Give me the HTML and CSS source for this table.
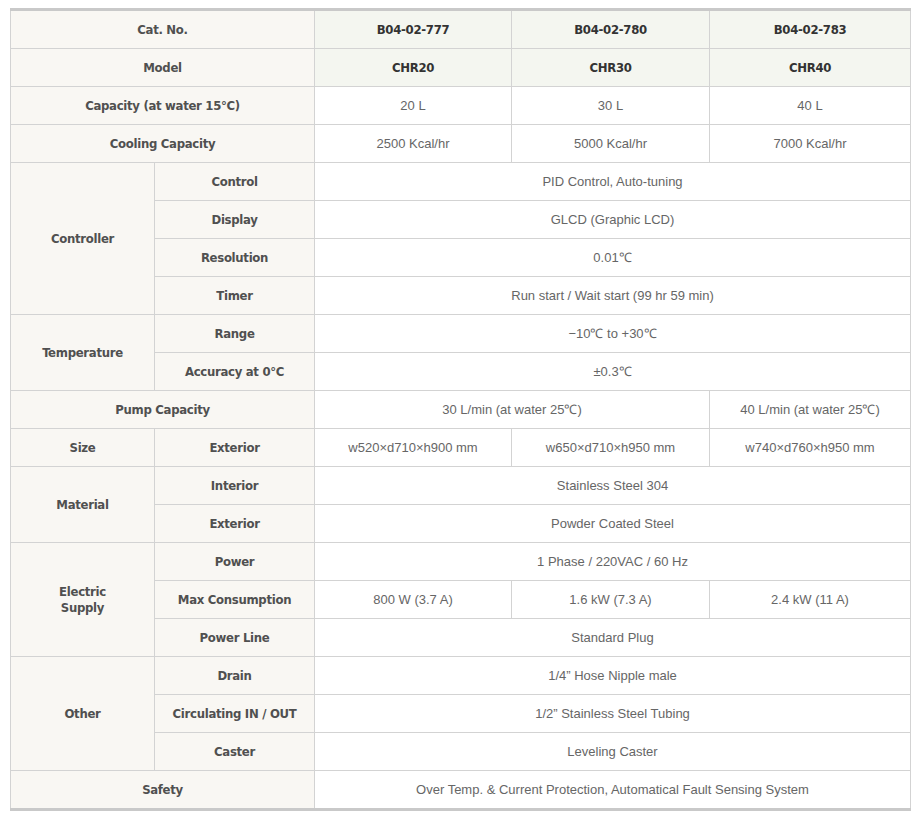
FILE: index.html
```html
<!DOCTYPE html>
<html>
<head>
<meta charset="utf-8">
<link rel="stylesheet" href="styles.css">
</head>
<body>
<div class="wrap">
<table class="spec">
  <colgroup>
    <col class="c1"><col class="c2"><col class="c3"><col class="c4"><col class="c5">
  </colgroup>
  <tr class="first"><th colspan="2">Cat. No.</th><td class="hd">B04-02-777</td><td class="hd">B04-02-780</td><td class="hd">B04-02-783</td></tr>
  <tr><th colspan="2">Model</th><td class="hd">CHR20</td><td class="hd">CHR30</td><td class="hd">CHR40</td></tr>
  <tr><th colspan="2">Capacity (at water 15°C)</th><td>20 L</td><td>30 L</td><td>40 L</td></tr>
  <tr><th colspan="2">Cooling Capacity</th><td>2500 Kcal/hr</td><td>5000 Kcal/hr</td><td>7000 Kcal/hr</td></tr>
  <tr><th rowspan="4">Controller</th><th>Control</th><td colspan="3">PID Control, Auto-tuning</td></tr>
  <tr><th>Display</th><td colspan="3">GLCD (Graphic LCD)</td></tr>
  <tr><th>Resolution</th><td colspan="3">0.01℃</td></tr>
  <tr><th>Timer</th><td colspan="3">Run start / Wait start (99 hr 59 min)</td></tr>
  <tr><th rowspan="2">Temperature</th><th>Range</th><td colspan="3">−10℃ to +30℃</td></tr>
  <tr><th>Accuracy at 0°C</th><td colspan="3">±0.3℃</td></tr>
  <tr><th colspan="2">Pump Capacity</th><td colspan="2">30 L/min (at water 25℃)</td><td>40 L/min (at water 25℃)</td></tr>
  <tr><th>Size</th><th>Exterior</th><td>w520×d710×h900 mm</td><td>w650×d710×h950 mm</td><td>w740×d760×h950 mm</td></tr>
  <tr><th rowspan="2">Material</th><th>Interior</th><td colspan="3">Stainless Steel 304</td></tr>
  <tr><th>Exterior</th><td colspan="3">Powder Coated Steel</td></tr>
  <tr><th rowspan="3">Electric<br>Supply</th><th>Power</th><td colspan="3">1 Phase / 220VAC / 60 Hz</td></tr>
  <tr><th>Max Consumption</th><td>800 W (3.7 A)</td><td>1.6 kW (7.3 A)</td><td>2.4 kW (11 A)</td></tr>
  <tr><th>Power Line</th><td colspan="3">Standard Plug</td></tr>
  <tr><th rowspan="3">Other</th><th>Drain</th><td colspan="3">1/4” Hose Nipple male</td></tr>
  <tr><th>Circulating IN / OUT</th><td colspan="3">1/2” Stainless Steel Tubing</td></tr>
  <tr><th>Caster</th><td colspan="3">Leveling Caster</td></tr>
  <tr class="last"><th colspan="2">Safety</th><td colspan="3">Over Temp. &amp; Current Protection, Automatical Fault Sensing System</td></tr>
</table>
</div>
</body>
</html>
```

FILE: styles.css
```css
html, body {
  margin: 0;
  padding: 0;
  background: #ffffff;
}
.wrap {
  padding: 8px 0 0 10px;
}
.spec {
  border-collapse: collapse;
  table-layout: fixed;
  width: 900px;
  border-top: 3px solid #c9c9c9;
  border-bottom: 3px solid #c9c9c9;
}
.c1 { width: 144px; }
.c2 { width: 160px; }
.c3 { width: 197px; }
.c4 { width: 198px; }
.c5 { width: 201px; }
.spec tr {
  height: 38px;
}
.spec tr.first,
.spec tr.last {
  height: 39px;
}
.spec th,
.spec td {
  border: 1px solid #d3d3d3;
  padding: 0;
  text-align: center;
  vertical-align: middle;
}
.spec th {
  background: #f9f7f3;
  color: #505050;
  font-family: "DejaVu Sans Condensed", "DejaVu Sans", sans-serif;
  font-stretch: condensed;
  font-weight: bold;
  font-size: 13px;
  line-height: 16px;
  letter-spacing: -0.3px;
}
.spec td {
  background: #ffffff;
  color: #666666;
  font-family: "Liberation Sans", Arial, sans-serif;
  font-size: 13px;
  line-height: 16px;
}
.spec td.hd {
  background: #f4f6f0;
  color: #333333;
  font-family: "DejaVu Sans Condensed", "DejaVu Sans", sans-serif;
  font-stretch: condensed;
  font-weight: bold;
  letter-spacing: -0.3px;
}
```
